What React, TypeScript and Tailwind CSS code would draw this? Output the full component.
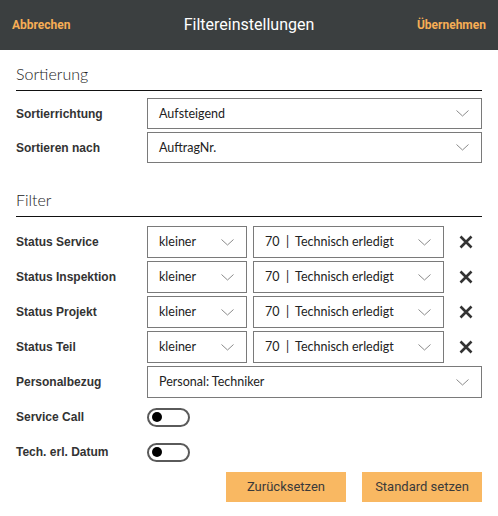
import { ReactNode } from "react";

const statusRows = ["Status Service", "Status Inspektion", "Status Projekt", "Status Teil"];

function Chevron() {
  return (
    <svg width="13" height="7" viewBox="0 0 13 7" className="shrink-0">
      <path d="M0.5 0.5 L6.5 6 L12.5 0.5" fill="none" stroke="#8a8a8a" strokeWidth="1" />
    </svg>
  );
}

function Select({ value, className }: { value: ReactNode; className: string }) {
  return (
    <div
      className={`flex items-center justify-between border border-[#7a7a7a] bg-white pl-[11px] pr-[12px] text-[12.5px] leading-[16px] text-[#222] ${className}`}
    >
      <span className="whitespace-pre">{value}</span>
      <Chevron />
    </div>
  );
}

function Label({ children }: { children: ReactNode }) {
  return (
    <span className="w-[131px] shrink-0 text-[12px] font-bold leading-[16px] text-[#333] [font-family:'Liberation_Sans',Arial,sans-serif]">
      {children}
    </span>
  );
}

function Toggle() {
  return (
    <div className="flex h-[19px] w-[43px] items-center rounded-full border-2 border-[#5a5a5a] px-[3px]">
      <div className="h-[10px] w-[10px] rounded-full bg-black" />
    </div>
  );
}

function CloseIcon() {
  return (
    <svg width="14" height="14" viewBox="0 0 14 14" className="ml-[15px]">
      <path d="M1.5 1.5 L12.5 12.5 M12.5 1.5 L1.5 12.5" stroke="#333" strokeWidth="2.6" />
    </svg>
  );
}

function Section({ title }: { title: string }) {
  return (
    <div className="border-b border-[#111] pb-[5px] text-[16px] font-light leading-[22px] text-[#222]">
      {title}
    </div>
  );
}

export default function App() {
  return (
    <div className="h-[516px] w-[498px] bg-white [font-family:Lato,sans-serif]">
      {/* Header bar */}
      <div className="flex h-[50px] items-center justify-between bg-[#3b3f40] px-[12px] [font-family:Roboto,sans-serif]">
        <span className="w-[80px] text-[12px] font-bold text-[#f7ae55]">Abbrechen</span>
        <span className="text-[16px] text-white">Filtereinstellungen</span>
        <span className="w-[80px] text-right text-[12px] font-bold text-[#f7ae55]">Übernehmen</span>
      </div>

      <div className="px-[16px]">
        <div className="pt-[13px]">
          <Section title="Sortierung" />
        </div>
        <div className="mt-[7px] flex flex-col gap-[3px]">
          <div className="flex items-center">
            <Label>Sortierrichtung</Label>
            <Select value="Aufsteigend" className="h-[31px] flex-1" />
          </div>
          <div className="flex items-center">
            <Label>Sortieren nach</Label>
            <Select value="AuftragNr." className="h-[31px] flex-1" />
          </div>
        </div>

        <div className="mt-[26px]">
          <Section title="Filter" />
        </div>
        <div className="mt-[9px] flex flex-col gap-[3px]">
          {statusRows.map((row) => (
            <div key={row} className="flex items-center">
              <Label>{row}</Label>
              <Select value="kleiner" className="h-[32px] w-[100px]" />
              <Select value="70  |  Technisch erledigt" className="ml-[6px] h-[32px] w-[191px]" />
              <CloseIcon />
            </div>
          ))}
          <div className="flex items-center">
            <Label>Personalbezug</Label>
            <Select value="Personal: Techniker" className="h-[32px] flex-1" />
          </div>
          <div className="flex h-[32px] items-center">
            <Label>Service Call</Label>
            <Toggle />
          </div>
          <div className="flex h-[32px] items-center">
            <Label>Tech. erl. Datum</Label>
            <Toggle />
          </div>
        </div>

        <div className="mt-[4px] flex justify-end gap-[16px] [font-family:Roboto,sans-serif]">
          <button className="h-[30px] w-[120px] bg-[#f9b862] text-[13px] text-[#3a3a3a]">Zurücksetzen</button>
          <button className="h-[30px] w-[120px] bg-[#f9b862] text-[13px] text-[#3a3a3a]">Standard setzen</button>
        </div>
      </div>
    </div>
  );
}
